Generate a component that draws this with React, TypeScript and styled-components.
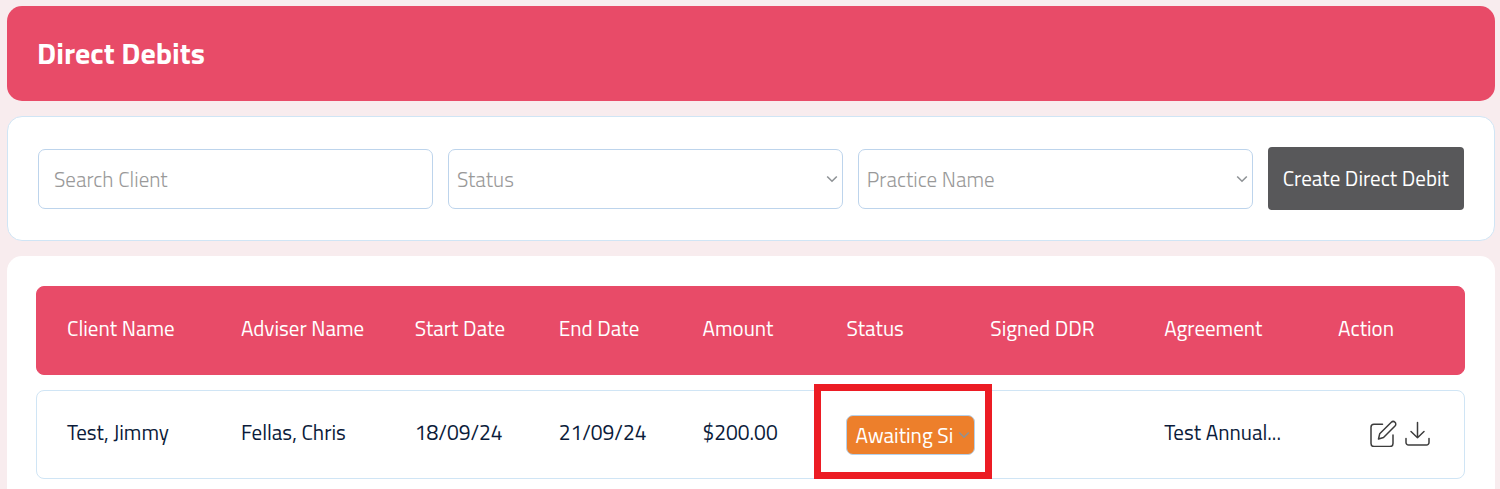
import React from "react";
import styled, { createGlobalStyle } from "styled-components";

const pink = "#e84b68";
const paleBlue = "#d0e5f5";

const GlobalStyle = createGlobalStyle`
  *, *::before, *::after { box-sizing: border-box; }
  body {
    margin: 0;
    background: #f8ecee;
    color: #0b1b3a;
    font-family: "Titillium Web", Roboto, "Liberation Sans", sans-serif;
    font-size: 21px;
    line-height: 30px;
  }
`;

const Page = styled.main`
  display: flex;
  flex-direction: column;
  gap: 15px;
  padding: 6px 5px 0 7px;
`;

const Banner = styled.header`
  padding: 32px 30px 33px;
  border-radius: 15px;
  background: ${pink};
`;

const Title = styled.h1`
  margin: 0;
  color: #fff;
  font-size: 30px;
  font-weight: 700;
  line-height: 30px;
`;

const Filters = styled.form`
  display: grid;
  grid-template-columns: repeat(3, minmax(0, 1fr)) auto;
  align-items: center;
  gap: 15px;
  padding: 30px;
  border: 1px solid ${paleBlue};
  border-radius: 15px;
  background: #fff;
`;

const controlStyles = `
  display: block;
  width: 100%;
  height: 60px;
  border: 1px solid #bdd4ec;
  border-radius: 7px;
  background: #fff;
  color: #999;
  font: inherit;
  font-weight: 300;
  outline: none;
`;

const SearchInput = styled.input`
  ${controlStyles}
  padding: 0 15px;
  &::placeholder { color: #999; opacity: 1; }
`;

const SelectWrap = styled.div`
  position: relative;
`;

const FilterSelect = styled.select`
  ${controlStyles}
  padding: 0 24px 0 8px;
  appearance: none;
`;

const StatusSelect = styled.select`
  display: block;
  width: 100%;
  height: 40px;
  padding: 0 16px 0 8px;
  border: 1px solid #b5d0ea;
  border-radius: 7px;
  background: #ed7f2b;
  color: #fff;
  font: inherit;
  appearance: none;
  outline: none;
`;

const ChevronIcon = styled.svg`
  position: absolute;
  top: 50%;
  right: 5px;
  width: 12px;
  height: 8px;
  margin-top: -4px;
  fill: none;
  stroke: #8f9396;
  stroke-width: 1.6;
  pointer-events: none;
`;

const Chevron = () => (
  <ChevronIcon viewBox="0 0 12 8" aria-hidden="true">
    <path d="M1.2 1.5 6 6.2l4.8-4.7" />
  </ChevronIcon>
);

const CreateButton = styled.button`
  height: 63px;
  padding: 0 15px 2px;
  border: 0;
  border-radius: 4px;
  background: #58585a;
  color: #fff;
  font: inherit;
  white-space: nowrap;
`;

const TableCard = styled.section`
  padding: 30px 30px 10px 29px;
  border-radius: 15px 15px 0 0;
  background: #fff;
`;

const Table = styled.table`
  display: flex;
  flex-direction: column;
  gap: 15px;
`;

const Row = styled.tr<{ $head?: boolean }>`
  display: grid;
  grid-template-columns: 29fr 29fr 24fr 24fr 24fr 24fr 29fr 29fr 26fr;
  align-items: center;
  height: 89px;
  border: 1px solid ${(p) => (p.$head ? pink : paleBlue)};
  border-radius: 8px;
  background: ${(p) => (p.$head ? pink : "#fff")};
`;

const HeadCell = styled.th`
  padding: 0 0 6px 30px;
  color: #fff;
  font-weight: 400;
  text-align: left;
  white-space: nowrap;
`;

const Cell = styled.td`
  padding: 0 0 6px 30px;
  white-space: nowrap;
`;

const StatusCell = styled.td`
  position: relative;
  margin-right: -16px;
  padding-left: 30px;
`;

const Highlight = styled.span`
  position: absolute;
  inset: -30px -16px -23px -2px;
  border: 7px solid #ec1c24;
  pointer-events: none;
`;

const ActionCell = styled.td`
  display: flex;
  justify-content: flex-end;
  gap: 8px;
  padding: 0 32px 3px 0;
`;

const IconButton = styled.button`
  display: flex;
  padding: 0;
  border: 0;
  background: none;
  color: #3c3c3c;
`;

const Icon = styled.svg`
  width: 27px;
  height: 28px;
  fill: none;
  stroke: currentColor;
  stroke-width: 1.5;
  stroke-linecap: round;
  stroke-linejoin: round;
`;

const columns = [
  "Client Name", "Adviser Name", "Start Date", "End Date", "Amount",
  "Status", "Signed DDR", "Agreement", "Action",
];

export default function App() {
  return (
    <>
      <GlobalStyle />
      <Page>
        <Banner>
          <Title>Direct Debits</Title>
        </Banner>

        <Filters onSubmit={(e) => e.preventDefault()}>
          <SearchInput type="text" placeholder="Search Client" aria-label="Search Client" />
          <SelectWrap>
            <FilterSelect aria-label="Status">
              <option>Status</option>
            </FilterSelect>
            <Chevron />
          </SelectWrap>
          <SelectWrap>
            <FilterSelect aria-label="Practice Name">
              <option>Practice Name</option>
            </FilterSelect>
            <Chevron />
          </SelectWrap>
          <CreateButton type="button">Create Direct Debit</CreateButton>
        </Filters>

        <TableCard>
          <Table>
            <thead>
              <Row $head>
                {columns.map((name) => (
                  <HeadCell key={name} scope="col">{name}</HeadCell>
                ))}
              </Row>
            </thead>
            <tbody>
              <Row>
                <Cell>Test, Jimmy</Cell>
                <Cell>Fellas, Chris</Cell>
                <Cell>18/09/24</Cell>
                <Cell>21/09/24</Cell>
                <Cell>$200.00</Cell>
                <StatusCell>
                  <SelectWrap>
                    <StatusSelect aria-label="Direct debit status">
                      <option>Awaiting Si</option>
                    </StatusSelect>
                    <Chevron />
                  </SelectWrap>
                  <Highlight />
                </StatusCell>
                <Cell />
                <Cell>Test Annual...</Cell>
                <ActionCell>
                  <IconButton type="button" aria-label="Edit">
                    <Icon viewBox="0 0 27 28">
                      <path d="M12.500 5.200H4a3 3 0 0 0-3 3V24.500a3 3 0 0 0 3 3h16a3 3 0 0 0 3-3V16" />
                      <path d="m8.500 20 1.200-5.200L21.300 3.300a2.600 2.600 0 0 1 3.700 3.700L13.500 18.500Z" />
                    </Icon>
                  </IconButton>
                  <IconButton type="button" aria-label="Download">
                    <Icon viewBox="0 0 27 28">
                      <path d="M12.500 3.500v15.200M6 12.500l6.500 6.200 6.500-6.200" />
                      <path d="M1 19.500v4a2.500 2.500 0 0 0 2.500 2.500h18a2.500 2.500 0 0 0 2.500-2.500v-4" />
                    </Icon>
                  </IconButton>
                </ActionCell>
              </Row>
            </tbody>
          </Table>
        </TableCard>
      </Page>
    </>
  );
}
